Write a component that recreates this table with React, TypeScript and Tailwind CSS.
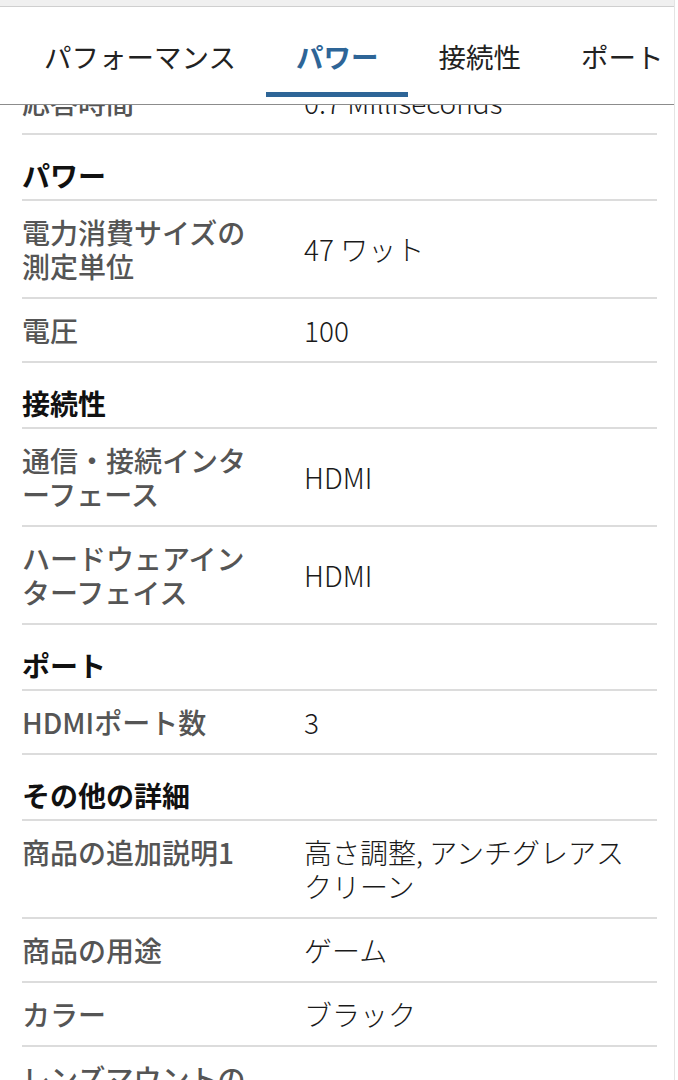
type Spec = { kind: "head"; title: string } | { kind: "row"; label: string; value: string };

const tabs = ["パフォーマンス", "パワー", "接続性", "ポート"];

const specs: Spec[] = [
  { kind: "row", label: "応答時間", value: "0.7 Milliseconds" },
  { kind: "head", title: "パワー" },
  { kind: "row", label: "電力消費サイズの測定単位", value: "47 ワット" },
  { kind: "row", label: "電圧", value: "100" },
  { kind: "head", title: "接続性" },
  { kind: "row", label: "通信・接続インターフェース", value: "HDMI" },
  { kind: "row", label: "ハードウェアインターフェイス", value: "HDMI" },
  { kind: "head", title: "ポート" },
  { kind: "row", label: "HDMIポート数", value: "3" },
  { kind: "head", title: "その他の詳細" },
  { kind: "row", label: "商品の追加説明1", value: "高さ調整, アンチグレアスクリーン" },
  { kind: "row", label: "商品の用途", value: "ゲーム" },
  { kind: "row", label: "カラー", value: "ブラック" },
  { kind: "row", label: "レンズマウントの互換性", value: "なし" },
];

function TabBar() {
  return (
    <nav className="relative z-10 flex border-y border-t-[#cfcfcf] border-b-[#8c8c8c] bg-white pl-[14px] whitespace-nowrap">
      {tabs.map((t) => {
        const active = t === "パワー";
        return (
          <div key={t} className="flex flex-col px-[30px] pt-[32px]">
            <span
              className={
                active
                  ? "text-[27.5px] leading-[34px] font-bold text-[#2e6597]"
                  : "text-[27.5px] leading-[34px] text-[#222]"
              }
            >
              {t}
            </span>
            <div className={active ? "mt-[19px] mb-[7px] -mx-[30px] h-[5px] bg-[#2e6597]" : "mt-[19px] mb-[7px] h-[5px]"} />
          </div>
        );
      })}
    </nav>
  );
}

export default function App() {
  return (
    <div className="h-[1080px] w-[678px] overflow-hidden bg-white font-['Noto_Sans_CJK_JP',sans-serif]">
      <div className="h-full w-[675px] border-r border-[#e4e4e4]">
        <div className="h-[6px] bg-[#f0f0f0]" />
        <TabBar />
        <div className="-mt-[34px] ml-[22px] w-[635px]">
          {specs.map((s, i) =>
            s.kind === "head" ? (
              <h3
                key={i}
                className="border-b-2 border-[#dcdcdc] pt-[23px] pb-[7px] text-[28px] leading-[34px] font-bold text-[#111]"
              >
                {s.title}
              </h3>
            ) : (
              <div key={i} className="grid grid-cols-[282px_330px] border-b-2 border-[#dcdcdc] py-[14px]">
                <span className="w-[232px] self-start text-[28px] leading-[34px] font-medium text-[#555]">
                  {s.label}
                </span>
                <span className="self-center text-[28px] leading-[34px] font-light text-[#1a1a1a]">{s.value}</span>
              </div>
            )
          )}
        </div>
      </div>
    </div>
  );
}
